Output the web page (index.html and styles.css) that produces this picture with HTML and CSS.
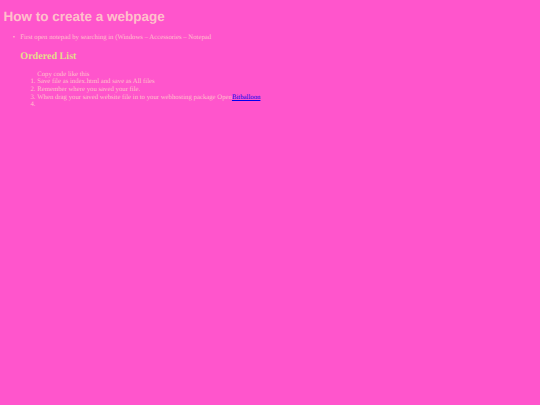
FILE: index.html
```html
<!DOCTYPE html>
<html>
  <head>
    <meta charset="UTF-8">
    <title>How to create a webpage</title>
    <link rel="stylesheet" href="styles.css">
  </head>
<body>
	<h1>How to create a webpage</h1>
	<ul>
		<li>First open notepad by searching in (Windows – Accessories – Notepad
			<h2>Ordered List</h2>
			<ol>
				Copy code like this
				<li>Save file as index.html and save as All files</li>
				<li>Remember where you saved your file.</li>
				<li>When drag your saved website file in to your webhosting package Open<a href="#">Bitballoon</a></li>
				<li></li>
			</ol>
		</li>
	</ul>
</body>
</html>
```

FILE: styles.css
```css
body{
	margin:3.4px;
	background:#ff55cc;
	color:#ffc0cb;
	font-family:"Liberation Serif",serif;
	font-size:6.75px;
	line-height:7.6px;
	text-rendering:geometricPrecision;
}
h1{
	margin:0;
	padding-top:6px;
	font-family:"Liberation Sans",sans-serif;
	font-size:13.5px;
	line-height:15.5px;
}
ul{
	margin:9.4px 0 0;
	padding-left:16.9px;
}
ul > li::marker{
	content:"\2022\00a0\00a0\00a0";
}
h2{
	margin:9.4px 0 8px;
	color:#e6dc8c;
	font-size:10.1px;
	line-height:11.5px;
}
ol{
	margin:0;
	padding-left:16.9px;
}
a{
	color:#0000ee;
}
```
